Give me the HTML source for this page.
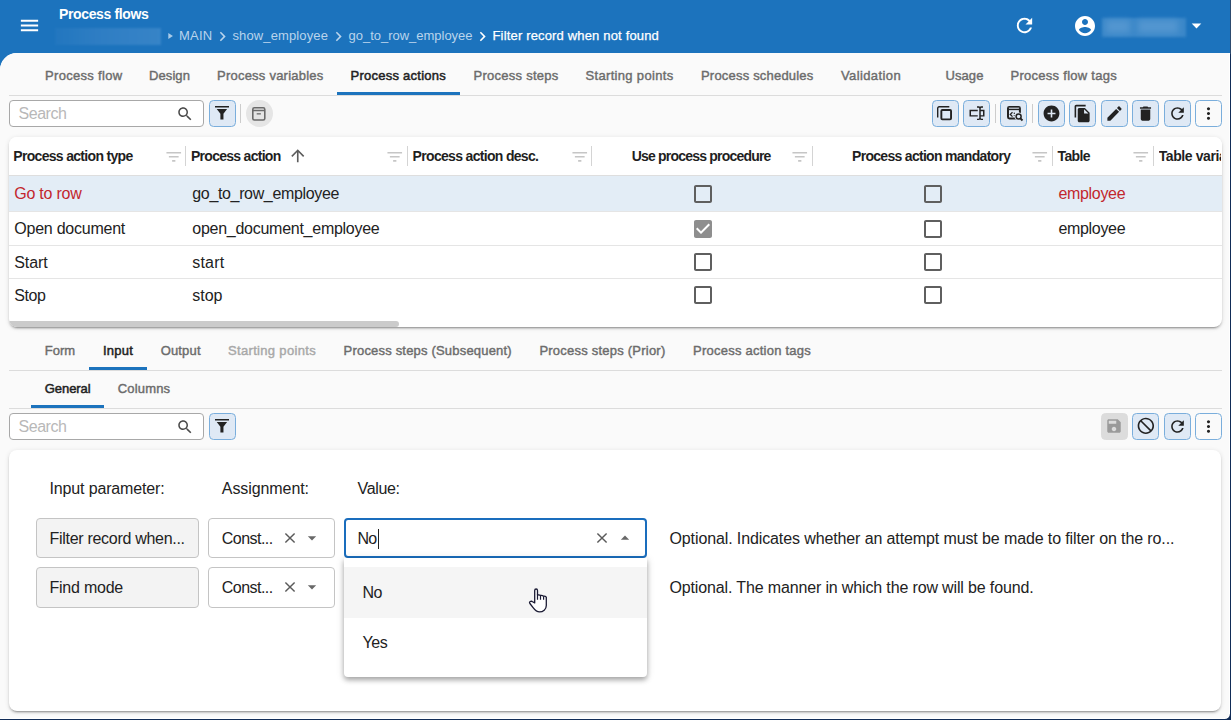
<!DOCTYPE html>
<html><head><meta charset="utf-8"><title>Process flows</title>
<style>
html,body{margin:0;padding:0}
body{width:1231px;height:720px;overflow:hidden;position:relative;background:#112c57;font-family:"Liberation Sans", sans-serif;}
.t{position:absolute;white-space:pre;line-height:20px;height:20px;font-family:"Liberation Sans", sans-serif;}
svg{display:block;overflow:visible}
</style></head><body>
<div style="position:absolute;left:0;top:0;width:1231px;height:70px;background:#1c73bd"></div>
<svg style="position:absolute;left:18.00px;top:14.00px;" width="23" height="23" viewBox="0 0 24 24"><path fill="#fff" fill-rule="evenodd" d="M3 18h18v-2H3v2zm0-5h18v-2H3v2zm0-7v2h18V6H3z"/></svg>
<div style="position:absolute;left:54.7px;top:27.8px;width:106.5px;height:17.2px;background:linear-gradient(90deg,#2377c0,#3280c5 45%,#3a86c9);filter:blur(.8px);opacity:.9"></div>
<svg style="position:absolute;left:165.00px;top:30.60px;" width="10" height="10" viewBox="0 0 24 24"><path fill="#a9cbe8" fill-rule="evenodd" d="M8 5v14l11-7z"/></svg>
<svg style="position:absolute;left:213.00px;top:26.50px;" width="19" height="19" viewBox="0 0 24 24"><path fill="#b9d4ec" fill-rule="evenodd" d="M10 6L8.59 7.41 13.17 12l-4.58 4.59L10 18l6-6z"/></svg>
<svg style="position:absolute;left:329.00px;top:26.50px;" width="19" height="19" viewBox="0 0 24 24"><path fill="#b9d4ec" fill-rule="evenodd" d="M10 6L8.59 7.41 13.17 12l-4.58 4.59L10 18l6-6z"/></svg>
<svg style="position:absolute;left:473.00px;top:26.50px;" width="19" height="19" viewBox="0 0 24 24"><path fill="#fff" fill-rule="evenodd" d="M10 6L8.59 7.41 13.17 12l-4.58 4.59L10 18l6-6z"/></svg>
<svg style="position:absolute;left:1013.00px;top:14.00px;transform:scaleX(1)" width="23" height="23" viewBox="0 0 24 24"><path fill="#fff" fill-rule="evenodd" d="M17.65 6.35C16.2 4.9 14.21 4 12 4c-4.42 0-7.99 3.58-7.99 8s3.57 8 7.99 8c3.73 0 6.84-2.55 7.73-6h-2.08c-.82 2.33-3.04 4-5.65 4-3.31 0-6-2.69-6-6s2.69-6 6-6c1.66 0 3.14.69 4.22 1.78L13 11h7V4l-2.35 2.35z"/></svg>
<svg style="position:absolute;left:1073.00px;top:14.00px;" width="24" height="24" viewBox="0 0 24 24"><path fill="#fff" fill-rule="evenodd" d="M12 2C6.48 2 2 6.48 2 12s4.48 10 10 10 10-4.48 10-10S17.52 2 12 2zm0 3c1.66 0 3 1.34 3 3s-1.34 3-3 3-3-1.34-3-3 1.34-3 3-3zm0 14.2c-2.5 0-4.71-1.28-6-3.22.03-1.99 4-3.08 6-3.08 1.99 0 5.97 1.09 6 3.08-1.29 1.94-3.5 3.22-6 3.22z"/></svg>
<div style="position:absolute;left:1102px;top:17.5px;width:84px;height:19.5px;background:#3f8aca;filter:blur(1.5px);opacity:.9"></div>
<div style="position:absolute;left:1106px;top:20px;width:24px;height:13px;background:#6aa5d8;filter:blur(3px);opacity:.5"></div>
<div style="position:absolute;left:1138px;top:20px;width:40px;height:13px;background:#6aa5d8;filter:blur(3px);opacity:.5"></div>
<svg style="position:absolute;left:1184.70px;top:14.10px;" width="23" height="23" viewBox="0 0 24 24"><path fill="#fff" fill-rule="evenodd" d="M7 10l5 5 5-5z"/></svg>
<div style="position:absolute;left:0;top:53px;width:1229.8px;height:665.8px;background:#fff;border-top-left-radius:17px;border-bottom-right-radius:5.5px;"></div>
<div style="position:absolute;left:0;top:53px;width:1228.5px;height:664.5px;background:#fafafa;border-top-left-radius:17px;border-bottom-right-radius:4.5px;"></div>
<div style="position:absolute;left:1229.8px;top:0;width:2px;height:53.5px;background:#2c4a6e"></div>
<div style="position:absolute;left:1229.8px;top:53.5px;width:2px;height:30px;background:#112c57"></div>
<div style="position:absolute;left:9px;top:94.5px;width:1213px;height:1px;background:#dcdcdc"></div>
<div style="position:absolute;left:337px;top:92.4px;width:122.5px;height:2.8px;background:#1c73bd"></div>
<div style="position:absolute;left:9px;top:100px;width:195px;height:27px;box-sizing:border-box;border:1px solid #a8a8a8;border-radius:4px;background:#fff"></div>
<svg style="position:absolute;left:175.70px;top:104.80px;" width="18" height="18" viewBox="0 0 24 24"><path fill="#4a4a4a" fill-rule="evenodd" d="M15.5 14h-.79l-.28-.27C15.41 12.59 16 11.11 16 9.5 16 5.91 13.09 3 9.5 3S3 5.91 3 9.5 5.91 16 9.5 16c1.61 0 3.09-.59 4.23-1.57l.27.28v.79l5 4.99L20.49 19l-4.99-5zm-6 0C7.01 14 5 11.99 5 9.5S7.01 5 9.5 5 14 7.01 14 9.5 11.99 14 9.5 14z"/></svg>
<div style="position:absolute;left:209px;top:100px;width:27px;height:26.8px;box-sizing:border-box;border-radius:4.5px;background:#dfe9f5;border:1px solid #7aaedc;"></div>
<svg style="position:absolute;left:215.05px;top:106.15px" width="14" height="13.5" viewBox="0 0 14 13.5" preserveAspectRatio="none"><path fill="#222" d="M0 0h14v1.56H0z M1.7 3h10.4L8.45 7.7v5.8H5.4V7.7z"/></svg>
<div style="position:absolute;left:239.8px;top:104px;width:1px;height:19px;background:#cccccc"></div>
<div style="position:absolute;left:246px;top:100px;width:27px;height:26.9px;border-radius:50%;background:#e5e5e5"></div>
<svg style="position:absolute;left:252.20px;top:107.00px" width="13.6" height="13.8" viewBox="0 0 13.6 13.8" preserveAspectRatio="none"><rect x="0.8" y="0.8" width="12" height="12.2" rx="1.6" fill="none" stroke="#6a6a6a" stroke-width="1.6"/><path d="M0.8 3.5h12" stroke="#6a6a6a" stroke-width="1.5" fill="none"/><rect x="4.7" y="6.2" width="4.2" height="1.3" fill="#6a6a6a"/></svg>
<div style="position:absolute;left:931.9px;top:100px;width:27px;height:26.8px;box-sizing:border-box;border-radius:4.5px;background:#dfe9f5;border:1px solid #7aaedc;"></div>
<svg style="position:absolute;left:937.35px;top:105.75px" width="15" height="14.3" viewBox="0 0 15 14.3" preserveAspectRatio="none"><path d="M12.3 0.7H2.2a1.5 1.5 0 0 0-1.5 1.5v9.4" fill="none" stroke="#222" stroke-width="1.4"/><rect x="4.35" y="4.05" width="9.7" height="9.3" rx="1" fill="none" stroke="#222" stroke-width="1.9"/></svg>
<div style="position:absolute;left:963.2px;top:100px;width:27px;height:26.8px;box-sizing:border-box;border-radius:4.5px;background:#dfe9f5;border:1px solid #7aaedc;"></div>
<svg style="position:absolute;left:967.90px;top:104.75px" width="18" height="16.4" viewBox="0 0 24 24" preserveAspectRatio="none"><path fill="#222" d="M17,7H22V17H17V19A1,1 0 0,0 18,20H20V22H17.5C16.95,22 16,21.55 16,21C16,21.55 15.05,22 14.5,22H12V20H14A1,1 0 0,0 15,19V5A1,1 0 0,0 14,4H12V2H14.5C15.05,2 16,2.45 16,3C16,2.45 16.95,2 17.5,2H20V4H18A1,1 0 0,0 17,5V7M2,7H13V9H4V15H13V17H2V7M20,15V9H17V15H20Z"/></svg>
<div style="position:absolute;left:1000px;top:100px;width:27px;height:26.8px;box-sizing:border-box;border-radius:4.5px;background:#dfe9f5;border:1px solid #7aaedc;"></div>
<svg style="position:absolute;left:1006.70px;top:106.15px" width="16" height="15.2" viewBox="0 0 16 15.2" preserveAspectRatio="none"><rect x="1" y="1" width="11.9" height="11.4" rx="1.3" fill="none" stroke="#222" stroke-width="2"/><path d="M1 3.4h12" stroke="#222" stroke-width="1.5"/><path d="M1.8 1.9h10.4" stroke="#dfe9f5" stroke-width="0.6"/><path d="M5.5 6.2L3.3 8.4l2.2 2.2" fill="none" stroke="#222" stroke-width="1.3"/><circle cx="7.3" cy="7.3" r="0.7" fill="#222"/><circle cx="7.3" cy="9.6" r="0.7" fill="#222"/><circle cx="11.6" cy="10.4" r="4" fill="#dfe9f5"/><path d="M13.4 12.3l2.8 2.8" stroke="#dfe9f5" stroke-width="3.4"/><circle cx="11.6" cy="10.4" r="2.5" fill="none" stroke="#222" stroke-width="1.5"/><path d="M13.4 12.3l2.1 2.2" stroke="#222" stroke-width="1.9"/></svg>
<div style="position:absolute;left:1038.1px;top:100px;width:27px;height:26.8px;box-sizing:border-box;border-radius:4.5px;background:#dfe9f5;border:1px solid #7aaedc;"></div>
<svg style="position:absolute;left:1042.10px;top:103.50px;" width="19" height="19" viewBox="0 0 24 24"><path fill="#222" fill-rule="evenodd" d="M12 2C6.48 2 2 6.48 2 12s4.48 10 10 10 10-4.48 10-10S17.52 2 12 2zm5 11h-4v4h-2v-4H7v-2h4V7h2v4h4v2z"/></svg>
<div style="position:absolute;left:1069.2px;top:100px;width:27px;height:26.8px;box-sizing:border-box;border-radius:4.5px;background:#dfe9f5;border:1px solid #7aaedc;"></div>
<svg style="position:absolute;left:1073.20px;top:103.50px;" width="19" height="19" viewBox="0 0 24 24"><path fill="#222" fill-rule="evenodd" d="M16 1H4c-1.1 0-2 .9-2 2v14h2V3h12V1zm-1 4l6 6v10c0 1.1-.9 2-2 2H7.99C6.89 23 6 22.1 6 21l.01-14c0-1.1.89-2 1.99-2h7zm-1 7h5.5L14 6.5V12z"/></svg>
<div style="position:absolute;left:1101.1px;top:100px;width:27px;height:26.8px;box-sizing:border-box;border-radius:4.5px;background:#dfe9f5;border:1px solid #7aaedc;"></div>
<svg style="position:absolute;left:1105.10px;top:103.50px;" width="19" height="19" viewBox="0 0 24 24"><path fill="#222" fill-rule="evenodd" d="M3 17.25V21h3.75L17.81 9.94l-3.75-3.75L3 17.25zM20.71 7.04c.39-.39.39-1.02 0-1.41l-2.34-2.34c-.39-.39-1.02-.39-1.41 0l-1.83 1.83 3.75 3.75 1.83-1.83z"/></svg>
<div style="position:absolute;left:1132.1px;top:100px;width:27px;height:26.8px;box-sizing:border-box;border-radius:4.5px;background:#dfe9f5;border:1px solid #7aaedc;"></div>
<svg style="position:absolute;left:1136.10px;top:103.50px;" width="19" height="19" viewBox="0 0 24 24"><path fill="#222" fill-rule="evenodd" d="M6 19c0 1.1.9 2 2 2h8c1.1 0 2-.9 2-2V7H6v12zM19 4h-3.5l-1-1h-5l-1 1H5v2h14V4z"/></svg>
<div style="position:absolute;left:1163.9px;top:100px;width:27px;height:26.8px;box-sizing:border-box;border-radius:4.5px;background:#dfe9f5;border:1px solid #7aaedc;"></div>
<svg style="position:absolute;left:1167.90px;top:103.50px;" width="19" height="19" viewBox="0 0 24 24"><path fill="#222" fill-rule="evenodd" d="M17.65 6.35C16.2 4.9 14.21 4 12 4c-4.42 0-7.99 3.58-7.99 8s3.57 8 7.99 8c3.73 0 6.84-2.55 7.73-6h-2.08c-.82 2.33-3.04 4-5.65 4-3.31 0-6-2.69-6-6s2.69-6 6-6c1.66 0 3.14.69 4.22 1.78L13 11h7V4l-2.35 2.35z"/></svg>
<div style="position:absolute;left:1195.2px;top:100px;width:27px;height:26.8px;box-sizing:border-box;border-radius:4.5px;background:transparent;border:1px solid #7aaedc;"></div>
<svg style="position:absolute;left:1199.20px;top:103.50px;" width="19" height="19" viewBox="0 0 24 24"><path fill="#222" fill-rule="evenodd" d="M12 8c1.1 0 2-.9 2-2s-.9-2-2-2-2 .9-2 2 .9 2 2 2zm0 2c-1.1 0-2 .9-2 2s.9 2 2 2 2-.9 2-2-.9-2-2-2zm0 6c-1.1 0-2 .9-2 2s.9 2 2 2 2-.9 2-2-.9-2-2-2z"/></svg>
<div style="position:absolute;left:995px;top:104px;width:1px;height:19px;background:#cccccc"></div>
<div style="position:absolute;left:1031.8px;top:104px;width:1px;height:19px;background:#cccccc"></div>
<div style="position:absolute;left:9px;top:137px;width:1212.5px;height:190px;background:#fff;border-radius:8px;box-shadow:0 3px 1px -2px rgba(0,0,0,.2),0 2px 2px 0 rgba(0,0,0,.14),0 1px 5px 0 rgba(0,0,0,.12);overflow:hidden"><div style="position:absolute;left:0;top:38.5px;width:100%;height:35.3px;background:#e3edf6"></div><div style="position:absolute;left:0;top:73.8px;width:100%;height:1px;background:#e5e5e5"></div><div style="position:absolute;left:0;top:107.8px;width:100%;height:1px;background:#e5e5e5"></div><div style="position:absolute;left:0;top:141.4px;width:100%;height:1px;background:#e5e5e5"></div><div style="position:absolute;left:0;top:184.3px;width:389.5px;height:5.7px;background:#cbcbcb;border-radius:0 3px 3px 0"></div><div style="position:absolute;left:0;top:0;width:100%;height:38px;background:#fff;border-bottom:1.9px solid #dedede"></div></div>
<svg style="position:absolute;left:288.05px;top:146.35px;" width="19.5" height="19.5" viewBox="0 0 24 24"><path fill="#5c5c5c" fill-rule="evenodd" d="M4 12l1.41 1.41L11 7.83V20h2V7.83l5.58 5.59L20 12l-8-8-8 8z"/></svg>
<svg style="position:absolute;left:163.85px;top:147.05px;" width="19.5" height="19.5" viewBox="0 0 24 24"><path fill="#c6c6c6" fill-rule="evenodd" d="M10 18h4v-2h-4v2zM3 6v2h18V6H3zm3 7h12v-2H6v2z"/></svg>
<svg style="position:absolute;left:384.85px;top:147.05px;" width="19.5" height="19.5" viewBox="0 0 24 24"><path fill="#c6c6c6" fill-rule="evenodd" d="M10 18h4v-2h-4v2zM3 6v2h18V6H3zm3 7h12v-2H6v2z"/></svg>
<svg style="position:absolute;left:569.85px;top:147.05px;" width="19.5" height="19.5" viewBox="0 0 24 24"><path fill="#c6c6c6" fill-rule="evenodd" d="M10 18h4v-2h-4v2zM3 6v2h18V6H3zm3 7h12v-2H6v2z"/></svg>
<svg style="position:absolute;left:789.85px;top:147.05px;" width="19.5" height="19.5" viewBox="0 0 24 24"><path fill="#c6c6c6" fill-rule="evenodd" d="M10 18h4v-2h-4v2zM3 6v2h18V6H3zm3 7h12v-2H6v2z"/></svg>
<svg style="position:absolute;left:1029.85px;top:147.05px;" width="19.5" height="19.5" viewBox="0 0 24 24"><path fill="#c6c6c6" fill-rule="evenodd" d="M10 18h4v-2h-4v2zM3 6v2h18V6H3zm3 7h12v-2H6v2z"/></svg>
<svg style="position:absolute;left:1130.85px;top:147.05px;" width="19.5" height="19.5" viewBox="0 0 24 24"><path fill="#c6c6c6" fill-rule="evenodd" d="M10 18h4v-2h-4v2zM3 6v2h18V6H3zm3 7h12v-2H6v2z"/></svg>
<div style="position:absolute;left:185px;top:146px;width:1px;height:19.5px;background:#d4d4d4"></div>
<div style="position:absolute;left:407.3px;top:146px;width:1px;height:19.5px;background:#d4d4d4"></div>
<div style="position:absolute;left:591.2px;top:146px;width:1px;height:19.5px;background:#d4d4d4"></div>
<div style="position:absolute;left:812px;top:146px;width:1px;height:19.5px;background:#d4d4d4"></div>
<div style="position:absolute;left:1052px;top:146px;width:1px;height:19.5px;background:#d4d4d4"></div>
<div style="position:absolute;left:1153.2px;top:146px;width:1px;height:19.5px;background:#d4d4d4"></div>
<svg style="position:absolute;left:691.00px;top:181.60px;" width="24" height="24" viewBox="0 0 24 24"><path fill="#5f5f5f" fill-rule="evenodd" d="M19 5v14H5V5h14m0-2H5c-1.1 0-2 .9-2 2v14c0 1.1.9 2 2 2h14c1.1 0 2-.9 2-2V5c0-1.1-.9-2-2-2z"/></svg>
<svg style="position:absolute;left:921.00px;top:181.60px;" width="24" height="24" viewBox="0 0 24 24"><path fill="#5f5f5f" fill-rule="evenodd" d="M19 5v14H5V5h14m0-2H5c-1.1 0-2 .9-2 2v14c0 1.1.9 2 2 2h14c1.1 0 2-.9 2-2V5c0-1.1-.9-2-2-2z"/></svg>
<svg style="position:absolute;left:691.00px;top:216.50px;" width="24" height="24" viewBox="0 0 24 24"><path fill="#8e8e8e" fill-rule="evenodd" d="M19 3H5c-1.11 0-2 .9-2 2v14c0 1.1.89 2 2 2h14c1.11 0 2-.9 2-2V5c0-1.1-.89-2-2-2zm-9 14l-5-5 1.41-1.41L10 14.17l7.59-7.59L19 8l-9 9z"/></svg>
<svg style="position:absolute;left:921.00px;top:216.50px;" width="24" height="24" viewBox="0 0 24 24"><path fill="#5f5f5f" fill-rule="evenodd" d="M19 5v14H5V5h14m0-2H5c-1.1 0-2 .9-2 2v14c0 1.1.9 2 2 2h14c1.1 0 2-.9 2-2V5c0-1.1-.9-2-2-2z"/></svg>
<svg style="position:absolute;left:691.00px;top:250.30px;" width="24" height="24" viewBox="0 0 24 24"><path fill="#5f5f5f" fill-rule="evenodd" d="M19 5v14H5V5h14m0-2H5c-1.1 0-2 .9-2 2v14c0 1.1.9 2 2 2h14c1.1 0 2-.9 2-2V5c0-1.1-.9-2-2-2z"/></svg>
<svg style="position:absolute;left:921.00px;top:250.30px;" width="24" height="24" viewBox="0 0 24 24"><path fill="#5f5f5f" fill-rule="evenodd" d="M19 5v14H5V5h14m0-2H5c-1.1 0-2 .9-2 2v14c0 1.1.9 2 2 2h14c1.1 0 2-.9 2-2V5c0-1.1-.9-2-2-2z"/></svg>
<svg style="position:absolute;left:691.00px;top:283.30px;" width="24" height="24" viewBox="0 0 24 24"><path fill="#5f5f5f" fill-rule="evenodd" d="M19 5v14H5V5h14m0-2H5c-1.1 0-2 .9-2 2v14c0 1.1.9 2 2 2h14c1.1 0 2-.9 2-2V5c0-1.1-.9-2-2-2z"/></svg>
<svg style="position:absolute;left:921.00px;top:283.30px;" width="24" height="24" viewBox="0 0 24 24"><path fill="#5f5f5f" fill-rule="evenodd" d="M19 5v14H5V5h14m0-2H5c-1.1 0-2 .9-2 2v14c0 1.1.9 2 2 2h14c1.1 0 2-.9 2-2V5c0-1.1-.9-2-2-2z"/></svg>
<div style="position:absolute;left:9px;top:370px;width:1213px;height:1px;background:#dcdcdc"></div>
<div style="position:absolute;left:89px;top:367.2px;width:58px;height:2.8px;background:#1c73bd"></div>
<div style="position:absolute;left:9px;top:408px;width:1213px;height:1px;background:#dcdcdc"></div>
<div style="position:absolute;left:30.7px;top:405.3px;width:73.3px;height:2.8px;background:#1c73bd"></div>
<div style="position:absolute;left:9px;top:413.3px;width:195px;height:27px;box-sizing:border-box;border:1px solid #a8a8a8;border-radius:4px;background:#fff"></div>
<svg style="position:absolute;left:175.70px;top:418.10px;" width="18" height="18" viewBox="0 0 24 24"><path fill="#4a4a4a" fill-rule="evenodd" d="M15.5 14h-.79l-.28-.27C15.41 12.59 16 11.11 16 9.5 16 5.91 13.09 3 9.5 3S3 5.91 3 9.5 5.91 16 9.5 16c1.61 0 3.09-.59 4.23-1.57l.27.28v.79l5 4.99L20.49 19l-4.99-5zm-6 0C7.01 14 5 11.99 5 9.5S7.01 5 9.5 5 14 7.01 14 9.5 11.99 14 9.5 14z"/></svg>
<div style="position:absolute;left:209px;top:413.3px;width:27px;height:26.8px;box-sizing:border-box;border-radius:4.5px;background:#dfe9f5;border:1px solid #7aaedc;"></div>
<svg style="position:absolute;left:215.05px;top:419.45px" width="14" height="13.5" viewBox="0 0 14 13.5" preserveAspectRatio="none"><path fill="#222" d="M0 0h14v1.56H0z M1.7 3h10.4L8.45 7.7v5.8H5.4V7.7z"/></svg>
<div style="position:absolute;left:1101.1px;top:413.3px;width:27px;height:26.8px;box-sizing:border-box;border-radius:4.5px;background:#dcdcdc;border:1px solid #dcdcdc;"></div>
<svg style="position:absolute;left:1104.80px;top:417.30px;" width="18" height="18" viewBox="0 0 24 24"><path fill="#9a9a9a" fill-rule="evenodd" d="M17 3H5c-1.11 0-2 .9-2 2v14c0 1.1.89 2 2 2h14c1.1 0 2-.9 2-2V7l-4-4zm-5 16c-1.66 0-3-1.34-3-3s1.34-3 3-3 3 1.34 3 3-1.34 3-3 3zm3-10H5V5h10v4z"/></svg>
<div style="position:absolute;left:1132.1px;top:413.3px;width:27px;height:26.8px;box-sizing:border-box;border-radius:4.5px;background:#dfe9f5;border:1px solid #7aaedc;"></div>
<svg style="position:absolute;left:1135.75px;top:416.45px;transform:scaleX(-1);" width="19.7" height="19.7" viewBox="0 0 24 24"><path fill="#222" fill-rule="evenodd" d="M12 2C6.48 2 2 6.48 2 12s4.48 10 10 10 10-4.48 10-10S17.52 2 12 2zM4 12c0-4.42 3.58-8 8-8 1.85 0 3.55.63 4.9 1.69L5.69 16.9C4.63 15.55 4 13.85 4 12zm8 8c-1.85 0-3.55-.63-4.9-1.69L18.31 7.1C19.37 8.45 20 10.15 20 12c0 4.42-3.58 8-8 8z"/></svg>
<div style="position:absolute;left:1163.9px;top:413.3px;width:27px;height:26.8px;box-sizing:border-box;border-radius:4.5px;background:#dfe9f5;border:1px solid #7aaedc;"></div>
<svg style="position:absolute;left:1167.90px;top:416.80px;" width="19" height="19" viewBox="0 0 24 24"><path fill="#222" fill-rule="evenodd" d="M17.65 6.35C16.2 4.9 14.21 4 12 4c-4.42 0-7.99 3.58-7.99 8s3.57 8 7.99 8c3.73 0 6.84-2.55 7.73-6h-2.08c-.82 2.33-3.04 4-5.65 4-3.31 0-6-2.69-6-6s2.69-6 6-6c1.66 0 3.14.69 4.22 1.78L13 11h7V4l-2.35 2.35z"/></svg>
<div style="position:absolute;left:1195.2px;top:413.3px;width:27px;height:26.8px;box-sizing:border-box;border-radius:4.5px;background:transparent;border:1px solid #7aaedc;"></div>
<svg style="position:absolute;left:1199.20px;top:416.80px;" width="19" height="19" viewBox="0 0 24 24"><path fill="#222" fill-rule="evenodd" d="M12 8c1.1 0 2-.9 2-2s-.9-2-2-2-2 .9-2 2 .9 2 2 2zm0 2c-1.1 0-2 .9-2 2s.9 2 2 2 2-.9 2-2-.9-2-2-2zm0 6c-1.1 0-2 .9-2 2s.9 2 2 2 2-.9 2-2-.9-2-2-2z"/></svg>
<div style="position:absolute;left:9px;top:450px;width:1212.2px;height:261.3px;background:#fff;border-radius:8px;box-shadow:0 3px 1px -2px rgba(0,0,0,.2),0 2px 2px 0 rgba(0,0,0,.14),0 1px 5px 0 rgba(0,0,0,.12)"></div>
<div style="position:absolute;left:36px;top:518.4px;width:163px;height:39.6px;box-sizing:border-box;border:1px solid #c4c4c4;border-radius:4px;background:#f3f3f3"></div>
<div style="position:absolute;left:208px;top:518.4px;width:126.7px;height:39.6px;box-sizing:border-box;border:1px solid #c4c4c4;border-radius:4px;background:#fff"></div>
<svg style="position:absolute;left:283.90px;top:532.00px" width="12" height="12" viewBox="0 0 12 12" preserveAspectRatio="none"><path d="M1.4 1.4l9.2 9.2M10.6 1.4l-9.2 9.2" stroke="#5a5a5a" stroke-width="1.45" fill="none"/></svg>
<svg style="position:absolute;left:301.80px;top:528.20px;" width="20" height="20" viewBox="0 0 24 24"><path fill="#686868" fill-rule="evenodd" d="M7 10l5 5 5-5z"/></svg>
<div style="position:absolute;left:36px;top:567.2px;width:163px;height:40.7px;box-sizing:border-box;border:1px solid #c4c4c4;border-radius:4px;background:#f3f3f3"></div>
<div style="position:absolute;left:208px;top:567.2px;width:126.7px;height:40.7px;box-sizing:border-box;border:1px solid #c4c4c4;border-radius:4px;background:#fff"></div>
<svg style="position:absolute;left:283.90px;top:580.90px" width="12" height="12" viewBox="0 0 12 12" preserveAspectRatio="none"><path d="M1.4 1.4l9.2 9.2M10.6 1.4l-9.2 9.2" stroke="#5a5a5a" stroke-width="1.45" fill="none"/></svg>
<svg style="position:absolute;left:301.80px;top:577.10px;" width="20" height="20" viewBox="0 0 24 24"><path fill="#686868" fill-rule="evenodd" d="M7 10l5 5 5-5z"/></svg>
<div style="position:absolute;left:344px;top:517.5px;width:303px;height:40.5px;box-sizing:border-box;border:2px solid #1a6dbd;border-radius:4px;background:#fff"></div>
<div style="position:absolute;left:377.5px;top:528.5px;width:1px;height:20px;background:#222"></div>
<svg style="position:absolute;left:595.90px;top:532.00px" width="12" height="12" viewBox="0 0 12 12" preserveAspectRatio="none"><path d="M1.4 1.4l9.2 9.2M10.6 1.4l-9.2 9.2" stroke="#5a5a5a" stroke-width="1.45" fill="none"/></svg>
<svg style="position:absolute;left:614.50px;top:528.00px;" width="20" height="20" viewBox="0 0 24 24"><path fill="#686868" fill-rule="evenodd" d="M7 14l5-5 5 5z"/></svg>
<div style="position:absolute;left:344px;top:558px;width:303px;height:119px;background:#fff;border-radius:0 0 4px 4px;box-shadow:0 3px 5px rgba(0,0,0,.3),0 1px 10px rgba(0,0,0,.12)"><div style="position:absolute;left:0;top:9.2px;width:100%;height:50.5px;background:#f5f5f5"></div></div>
<svg style="position:absolute;left:515px;top:580px" width="50" height="40" viewBox="0 0 50 40"><path d="M19.7 22.9V10.4a1.4 1.4 0 0 1 2.8 0V15.1q1.5-.7 3 .3q1.6-.4 3.1.8q1.5-.3 2.700.9V25.5C31.3 29.500 28 31.900 24.500 31.900C21.500 31.900 19.500 29.500 18.100 27.600L14.900 23.500q-.9-1.300.4-2q1.100-.6 2.300.2z" fill="#fff" stroke="#1a1a33" stroke-width="1.3" stroke-linejoin="round"/><path d="M22.500 14.500V19.700M25.500 15.500V19.700M28.600 16.300V19.700" stroke="#1a1a33" stroke-width="1.2" fill="none"/></svg>
<div class="t" style="left:59.00px;top:3.70px;font-size:14px;font-weight:700;color:#fff;letter-spacing:-0.358px;">Process flows</div>
<div class="t" style="left:179.00px;top:25.50px;font-size:13px;font-weight:400;color:#b9d4ec;letter-spacing:0.250px;">MAIN</div>
<div class="t" style="left:232.50px;top:25.50px;font-size:13px;font-weight:400;color:#b9d4ec;letter-spacing:0.119px;">show_employee</div>
<div class="t" style="left:348.50px;top:25.50px;font-size:13px;font-weight:400;color:#b9d4ec;letter-spacing:-0.017px;">go_to_row_employee</div>
<div class="t" style="left:492.50px;top:25.50px;font-size:13px;font-weight:400;color:#fff;letter-spacing:0.165px;-webkit-text-stroke:0.25px #fff;">Filter record when not found</div>
<div class="t" style="left:45.00px;top:65.50px;font-size:13px;font-weight:400;color:#6c6c6c;letter-spacing:0.316px;-webkit-text-stroke:0.42px #6c6c6c;">Process flow</div>
<div class="t" style="left:149.00px;top:65.50px;font-size:13px;font-weight:400;color:#6c6c6c;letter-spacing:0.089px;-webkit-text-stroke:0.42px #6c6c6c;">Design</div>
<div class="t" style="left:217.00px;top:65.50px;font-size:13px;font-weight:400;color:#6c6c6c;letter-spacing:0.229px;-webkit-text-stroke:0.42px #6c6c6c;">Process variables</div>
<div class="t" style="left:350.50px;top:65.50px;font-size:13px;font-weight:400;color:#222;letter-spacing:0.249px;-webkit-text-stroke:0.5px #222;">Process actions</div>
<div class="t" style="left:473.50px;top:65.50px;font-size:13px;font-weight:400;color:#6c6c6c;letter-spacing:0.257px;-webkit-text-stroke:0.42px #6c6c6c;">Process steps</div>
<div class="t" style="left:585.50px;top:65.50px;font-size:13px;font-weight:400;color:#6c6c6c;letter-spacing:0.326px;-webkit-text-stroke:0.42px #6c6c6c;">Starting points</div>
<div class="t" style="left:701.00px;top:65.50px;font-size:13px;font-weight:400;color:#6c6c6c;letter-spacing:0.199px;-webkit-text-stroke:0.42px #6c6c6c;">Process schedules</div>
<div class="t" style="left:841.00px;top:65.50px;font-size:13px;font-weight:400;color:#6c6c6c;letter-spacing:0.386px;-webkit-text-stroke:0.42px #6c6c6c;">Validation</div>
<div class="t" style="left:945.50px;top:65.50px;font-size:13px;font-weight:400;color:#6c6c6c;letter-spacing:0.084px;-webkit-text-stroke:0.42px #6c6c6c;">Usage</div>
<div class="t" style="left:1010.50px;top:65.50px;font-size:13px;font-weight:400;color:#6c6c6c;letter-spacing:0.272px;-webkit-text-stroke:0.42px #6c6c6c;">Process flow tags</div>
<div class="t" style="left:18.50px;top:103.50px;font-size:16px;font-weight:400;color:#b8b8b8;letter-spacing:-0.451px;">Search</div>
<div class="t" style="left:13.30px;top:146.30px;font-size:14px;font-weight:700;color:#1f1f1f;letter-spacing:-0.688px;">Process action type</div>
<div class="t" style="left:191.00px;top:146.30px;font-size:14px;font-weight:700;color:#1f1f1f;letter-spacing:-0.722px;">Process action</div>
<div class="t" style="left:412.60px;top:146.30px;font-size:14px;font-weight:700;color:#1f1f1f;letter-spacing:-0.680px;">Process action desc.</div>
<div class="t" style="left:631.70px;top:146.30px;font-size:14px;font-weight:700;color:#1f1f1f;letter-spacing:-0.796px;">Use process procedure</div>
<div class="t" style="left:852.00px;top:146.30px;font-size:14px;font-weight:700;color:#1f1f1f;letter-spacing:-0.698px;">Process action mandatory</div>
<div class="t" style="left:1057.50px;top:146.30px;font-size:14px;font-weight:700;color:#1f1f1f;letter-spacing:-0.606px;">Table</div>
<div class="t" style="left:1158.70px;top:146.30px;font-size:14px;font-weight:700;color:#1f1f1f;letter-spacing:-0.396px;width:62.8px;overflow:hidden;">Table variable</div>
<div class="t" style="left:14.30px;top:184.20px;font-size:16px;font-weight:400;color:#c2272d;letter-spacing:-0.240px;">Go to row</div>
<div class="t" style="left:192.30px;top:184.20px;font-size:16px;font-weight:400;color:#222;letter-spacing:-0.350px;">go_to_row_employee</div>
<div class="t" style="left:1058.40px;top:184.20px;font-size:16px;font-weight:400;color:#c2272d;letter-spacing:-0.309px;">employee</div>
<div class="t" style="left:14.30px;top:219.10px;font-size:16px;font-weight:400;color:#222;letter-spacing:-0.243px;">Open document</div>
<div class="t" style="left:192.30px;top:219.10px;font-size:16px;font-weight:400;color:#222;letter-spacing:-0.265px;">open_document_employee</div>
<div class="t" style="left:1058.40px;top:219.10px;font-size:16px;font-weight:400;color:#222;letter-spacing:-0.309px;">employee</div>
<div class="t" style="left:14.30px;top:252.90px;font-size:16px;font-weight:400;color:#222;letter-spacing:-0.119px;">Start</div>
<div class="t" style="left:192.30px;top:252.90px;font-size:16px;font-weight:400;color:#222;letter-spacing:0.175px;">start</div>
<div class="t" style="left:14.30px;top:285.90px;font-size:16px;font-weight:400;color:#222;letter-spacing:-0.430px;">Stop</div>
<div class="t" style="left:192.30px;top:285.90px;font-size:16px;font-weight:400;color:#222;letter-spacing:-0.013px;">stop</div>
<div class="t" style="left:44.80px;top:340.50px;font-size:13px;font-weight:400;color:#6c6c6c;letter-spacing:-0.036px;-webkit-text-stroke:0.42px #6c6c6c;">Form</div>
<div class="t" style="left:103.00px;top:340.50px;font-size:13px;font-weight:400;color:#222;letter-spacing:0.216px;-webkit-text-stroke:0.5px #222;">Input</div>
<div class="t" style="left:160.70px;top:340.50px;font-size:13px;font-weight:400;color:#6c6c6c;letter-spacing:0.161px;-webkit-text-stroke:0.42px #6c6c6c;">Output</div>
<div class="t" style="left:228.00px;top:340.50px;font-size:13px;font-weight:400;color:#a8a8a8;letter-spacing:0.326px;-webkit-text-stroke:0.42px #a8a8a8;">Starting points</div>
<div class="t" style="left:343.60px;top:340.50px;font-size:13px;font-weight:400;color:#6c6c6c;letter-spacing:0.188px;-webkit-text-stroke:0.42px #6c6c6c;">Process steps (Subsequent)</div>
<div class="t" style="left:539.40px;top:340.50px;font-size:13px;font-weight:400;color:#6c6c6c;letter-spacing:0.225px;-webkit-text-stroke:0.42px #6c6c6c;">Process steps (Prior)</div>
<div class="t" style="left:693.00px;top:340.50px;font-size:13px;font-weight:400;color:#6c6c6c;letter-spacing:0.239px;-webkit-text-stroke:0.42px #6c6c6c;">Process action tags</div>
<div class="t" style="left:44.80px;top:378.50px;font-size:13px;font-weight:400;color:#222;letter-spacing:-0.079px;-webkit-text-stroke:0.5px #222;">General</div>
<div class="t" style="left:117.70px;top:378.50px;font-size:13px;font-weight:400;color:#6c6c6c;letter-spacing:0.186px;-webkit-text-stroke:0.42px #6c6c6c;">Columns</div>
<div class="t" style="left:18.50px;top:416.80px;font-size:16px;font-weight:400;color:#b8b8b8;letter-spacing:-0.451px;">Search</div>
<div class="t" style="left:49.50px;top:478.50px;font-size:16px;font-weight:400;color:#222;letter-spacing:-0.150px;">Input parameter:</div>
<div class="t" style="left:221.80px;top:478.50px;font-size:16px;font-weight:400;color:#222;letter-spacing:-0.077px;">Assignment:</div>
<div class="t" style="left:357.60px;top:478.50px;font-size:16px;font-weight:400;color:#222;letter-spacing:-0.381px;">Value:</div>
<div class="t" style="left:49.50px;top:528.90px;font-size:16px;font-weight:400;color:#222;letter-spacing:-0.295px;">Filter record when...</div>
<div class="t" style="left:221.80px;top:528.90px;font-size:16px;font-weight:400;color:#222;letter-spacing:-0.530px;">Const...</div>
<div class="t" style="left:49.50px;top:577.80px;font-size:16px;font-weight:400;color:#222;letter-spacing:-0.233px;">Find mode</div>
<div class="t" style="left:221.80px;top:577.80px;font-size:16px;font-weight:400;color:#222;letter-spacing:-0.530px;">Const...</div>
<div class="t" style="left:669.50px;top:528.90px;font-size:16px;font-weight:400;color:#222;letter-spacing:-0.113px;">Optional. Indicates whether an attempt must be made to filter on the ro...</div>
<div class="t" style="left:669.50px;top:577.80px;font-size:16px;font-weight:400;color:#222;letter-spacing:-0.144px;">Optional. The manner in which the row will be found.</div>
<div class="t" style="left:357.60px;top:528.90px;font-size:16px;font-weight:400;color:#222;letter-spacing:-0.777px;">No</div>
<div class="t" style="left:362.40px;top:583.40px;font-size:16px;font-weight:400;color:#222;letter-spacing:-0.327px;">No</div>
<div class="t" style="left:362.40px;top:633.00px;font-size:16px;font-weight:400;color:#222;letter-spacing:-0.336px;">Yes</div>
</body></html>
